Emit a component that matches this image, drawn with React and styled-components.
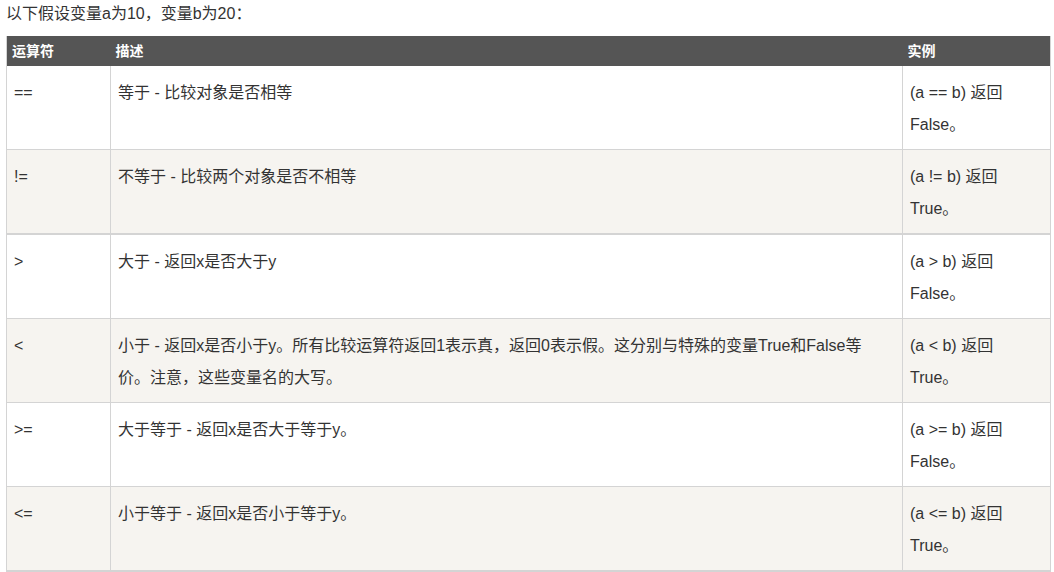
import React from 'react';
import styled, { createGlobalStyle } from 'styled-components';

const rows = [
  { op: '==', desc: '等于 - 比较对象是否相等', ex: '(a == b) 返回', res: 'False。' },
  { op: '!=', desc: '不等于 - 比较两个对象是否不相等', ex: '(a != b) 返回', res: 'True。', thick: true },
  { op: '>', desc: '大于 - 返回x是否大于y', ex: '(a > b) 返回', res: 'False。' },
  {
    op: '<',
    desc: '小于 - 返回x是否小于y。所有比较运算符返回1表示真，返回0表示假。这分别与特殊的变量True和False等价。注意，这些变量名的大写。',
    ex: '(a < b) 返回',
    res: 'True。',
  },
  { op: '>=', desc: '大于等于 - 返回x是否大于等于y。', ex: '(a >= b) 返回', res: 'False。' },
  { op: '<=', desc: '小于等于 - 返回x是否小于等于y。', ex: '(a <= b) 返回', res: 'True。' },
];

const App = () => {
  return (
    <>
      <GlobalStyle />
      <Page>
        <Intro>以下假设变量a为10，变量b为20：</Intro>
        <Table>
          <colgroup>
            <col style={{ width: 104 }} />
            <col style={{ width: 792 }} />
            <col style={{ width: 148 }} />
          </colgroup>
          <thead>
            <tr>
              <Th>运算符</Th>
              <Th>描述</Th>
              <Th>实例</Th>
            </tr>
          </thead>
          <tbody>
            {rows.map((r, i) => (
              <Row key={r.op} $even={i % 2 === 1} $thick={r.thick}>
                <Td>{r.op}</Td>
                <Td>{r.desc}</Td>
                <Td>
                  {r.ex}
                  <br />
                  {r.res}
                </Td>
              </Row>
            ))}
          </tbody>
        </Table>
      </Page>
    </>
  );
};

const GlobalStyle = createGlobalStyle`
  body {
    margin: 0;
    background: #fff;
    color: #333;
    font-family: "Liberation Sans", Arial, "Noto Sans CJK SC", sans-serif;
  }
`;

const Page = styled.div`
  padding: 0 4px 0 6px;
`;

const Intro = styled.p`
  margin: 0 0 8px;
  font-size: 16px;
  line-height: 28px;
  color: #333;
`;

const Table = styled.table`
  width: 100%;
  table-layout: fixed;
  border-collapse: collapse;
  border-left: 1px solid #d4d4d4;
  border-right: 1px solid #d4d4d4;
  border-bottom: 2px solid #d4d4d4;
`;

const Th = styled.th`
  height: 30px;
  padding: 0 5px;
  background: #555;
  color: #fff;
  font-size: 14px;
  font-weight: bold;
  text-align: left;
  line-height: 30px;
`;

const Row = styled.tr`
  background: ${(p) => (p.$even ? '#f6f4f0' : '#fff')};
  border-bottom: ${(p) => (p.$thick ? '2px' : '1px')} solid #d4d4d4;
`;

const Td = styled.td`
  padding: 11px 20px 8px 7px;
  font-size: 16px;
  line-height: 32px;
  vertical-align: top;
  border-left: 1px solid #d4d4d4;
  color: #333;
`;

export default App;
